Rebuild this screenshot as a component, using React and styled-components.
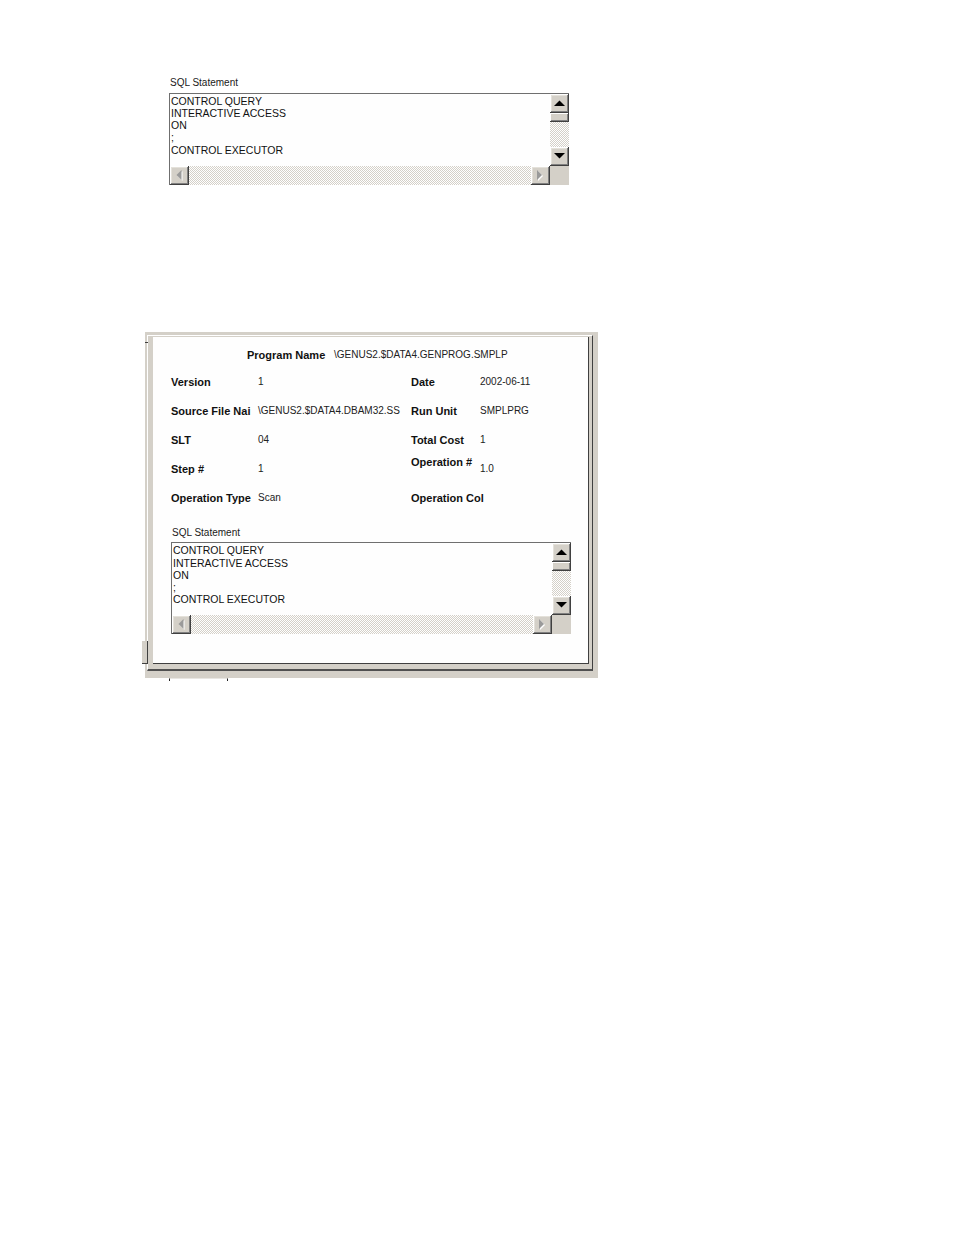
import React from "react";
import styled, { createGlobalStyle } from "styled-components";

const GlobalStyle = createGlobalStyle`
  html, body { margin: 0; padding: 0; background: #ffffff; }
  body { font-family: "Liberation Sans", Arial, sans-serif; color: #151515; }
`;

const PageWrap = styled.div`
  display: flex;
  flex-direction: column;
  align-items: flex-start;
  min-height: 1235px;
`;

/* ---------- SQL statement group ---------- */
const SqlGroup = styled.div`
  display: flex;
  flex-direction: column;
  margin: ${(p) => p.$margin || "0"};
`;

const SqlLabel = styled.div`
  font-size: 10px;
  line-height: 12px;
  padding-left: 1px;
  margin-bottom: 3.5px;
  color: #1a1a1a;
  white-space: nowrap;
`;

const SqlBox = styled.div`
  width: 399px;
  height: 91px;
  border-top: 1px solid #6f6f6f;
  border-left: 1px solid #6f6f6f;
  display: grid;
  grid-template-columns: 380px 19px;
  grid-template-rows: 72px 19px;
  background: #fefefe;
`;

const SqlText = styled.div`
  font-size: 10.5px;
  line-height: 12.25px;
  padding: 1px 0 0 1px;
  overflow: hidden;
  white-space: pre;
  color: #111;
`;

const VScroll = styled.div`
  display: grid;
  grid-template-rows: 19px 9px 1fr 19px;
`;

const HScroll = styled.div`
  display: grid;
  grid-template-columns: 19px 1fr 19px;
`;

const Track = styled.div`
  background: repeating-conic-gradient(#d4d0c8 0% 25%, #ffffff 0% 50%) 0 0 / 2px 2px;
`;

const Corner = styled.div`
  background: #d4d0c8;
`;

const ScrollButton = styled.div`
  background: #d4d0c8;
  box-shadow: inset -1px -1px #404040, inset 1px 1px #ffffff,
    inset -2px -2px #808080, inset 2px 2px #e4e1da;
  display: flex;
  align-items: center;
  justify-content: center;
`;

const Thumb = styled.div`
  background: #d4d0c8;
  box-shadow: inset -1px -1px #404040, inset 1px 1px #ffffff,
    inset -2px -2px #808080;
`;

const Arrow = ({ dir, disabled }) => {
  const pts = {
    up: "0,6 11,6 5.5,0.5",
    down: "0,0 11,0 5.5,5.5",
    left: "5.5,0 5.5,10 0.5,5",
    right: "0,0 0,10 5,5",
  }[dir];
  const vertical = dir === "up" || dir === "down";
  const w = vertical ? 11 : 7;
  const h = vertical ? 7 : 11;
  return (
    <svg width={w} height={h} viewBox={`0 0 ${w} ${h}`}>
      {disabled && (
        <polygon points={pts} fill="#ffffff" transform="translate(1 1)" />
      )}
      <polygon points={pts} fill={disabled ? "#9a9a9a" : "#000000"} />
    </svg>
  );
};

const SQL_LINES = [
  "CONTROL QUERY",
  "INTERACTIVE ACCESS",
  "ON",
  ";",
  "CONTROL EXECUTOR",
].join("\n");

const SqlStatement = ({ margin }) => (
  <SqlGroup $margin={margin}>
    <SqlLabel>SQL Statement</SqlLabel>
    <SqlBox>
      <SqlText>{SQL_LINES}</SqlText>
      <VScroll>
        <ScrollButton>
          <Arrow dir="up" />
        </ScrollButton>
        <Thumb />
        <Track />
        <ScrollButton>
          <Arrow dir="down" />
        </ScrollButton>
      </VScroll>
      <HScroll>
        <ScrollButton>
          <Arrow dir="left" disabled />
        </ScrollButton>
        <Track />
        <ScrollButton>
          <Arrow dir="right" disabled />
        </ScrollButton>
      </HScroll>
      <Corner />
    </SqlBox>
  </SqlGroup>
);

/* ---------- Dialog ---------- */
const DialogArea = styled.div`
  margin: 147px 0 0 145px;
  display: flex;
  flex-direction: column;
`;

const Window = styled.div`
  position: relative;
  width: 453px;
  box-sizing: border-box;
  background: #d4d0c8;
  padding: 3px 5px 7px 2px;
`;

const EdgeTick = styled.div`
  position: absolute;
  left: 0;
  top: 10px;
  width: 3px;
  height: 1px;
  background: #404040;
`;

const EdgeButton = styled.div`
  position: absolute;
  left: -3px;
  top: 309px;
  width: 5px;
  height: 22px;
  background: #d4d0c8;
  border-right: 1px solid #404040;
  border-bottom: 1px solid #404040;
`;

const TabPanel = styled.div`
  border-top: 1px solid #ffffff;
  border-left: 1px solid #ffffff;
  border-right: 1px solid #404040;
  border-bottom: 2px solid #505050;
  padding: 1px 3px 5px 5px;
`;

const PropPage = styled.div`
  background: #fefefe;
  height: 327px;
  border-right: 1px solid #404040;
  border-bottom: 1px solid #404040;
  box-sizing: border-box;
  display: flex;
  flex-direction: column;
`;

const HeaderRow = styled.div`
  display: flex;
  align-items: center;
  padding: 11px 0 0 94px;
  height: 14px;
`;

const FieldGrid = styled.div`
  margin: 6.5px 0 0 18px;
  display: grid;
  grid-template-columns: 87px 153px 69px 1fr;
  grid-auto-rows: 28.9px;
  align-items: center;
`;

const Label = styled.div`
  font-size: 11px;
  font-weight: bold;
  line-height: 14px;
  color: #111;
  white-space: nowrap;
  align-self: ${(p) => (p.$top ? "start" : "center")};
  width: ${(p) => (p.$w ? p.$w + "px" : "auto")};
`;

const Value = styled.div`
  font-size: 10px;
  line-height: 14px;
  color: #222;
  white-space: nowrap;
`;

const TabStrip = styled.div`
  display: flex;
  height: 3px;
  padding-left: 24px;
`;

const Tab = styled.div`
  width: 57px;
  border-left: 1px solid #222;
  border-right: 1px solid #222;
  border-top: 1px solid #e8e6e2;
`;

const FIELDS = [
  ["Version", "1", "Date", "2002-06-11"],
  ["Source File Nai", "\\GENUS2.$DATA4.DBAM32.SS", "Run Unit", "SMPLPRG"],
  ["SLT", "04", "Total Cost", "1"],
  ["Step #", "1", "Operation #", "1.0", true],
  ["Operation Type", "Scan", "Operation Col", ""],
];

const Dialog = () => (
  <DialogArea>
    <Window>
      <EdgeTick />
      <EdgeButton />
      <TabPanel>
        <PropPage>
          <HeaderRow>
            <Label $w={87}>Program Name</Label>
            <Value>\GENUS2.$DATA4.GENPROG.SMPLP</Value>
          </HeaderRow>
          <FieldGrid>
            {FIELDS.map(([l1, v1, l2, v2, raise]) => (
              <React.Fragment key={l1}>
                <Label>{l1}</Label>
                <Value>{v1}</Value>
                <Label $top={raise}>{l2}</Label>
                <Value>{v2}</Value>
              </React.Fragment>
            ))}
          </FieldGrid>
          <SqlStatement margin="14.5px 0 0 18px" />
        </PropPage>
      </TabPanel>
    </Window>
    <TabStrip>
      <Tab />
    </TabStrip>
  </DialogArea>
);

export default function App() {
  return (
    <>
      <GlobalStyle />
      <PageWrap>
        <SqlStatement margin="77px 0 0 169px" />
        <Dialog />
      </PageWrap>
    </>
  );
}
